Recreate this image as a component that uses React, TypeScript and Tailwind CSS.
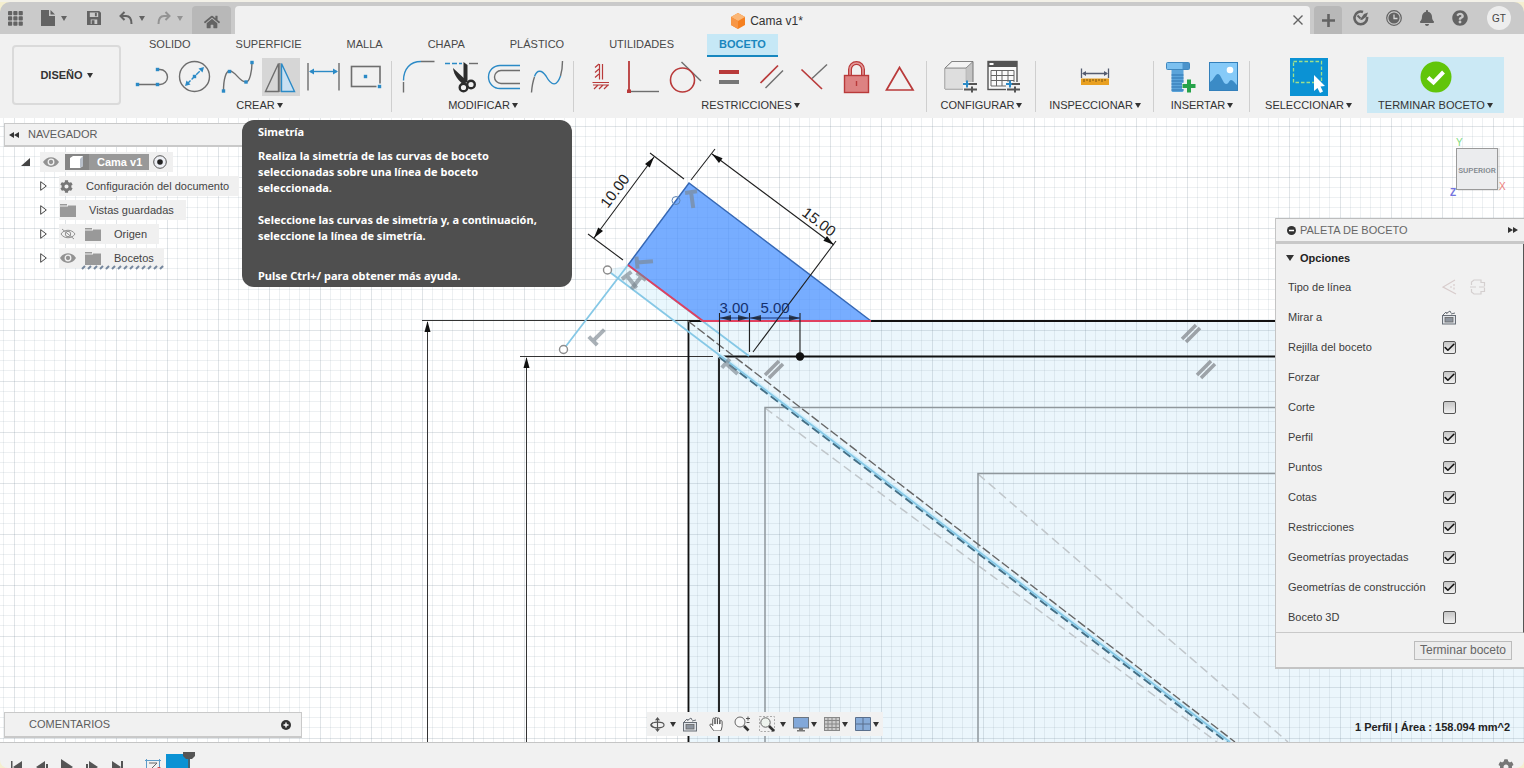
import React, { useState } from "react";
import { Check } from "lucide-react";
import { FaBell, FaCog, FaHome, FaQuestionCircle, FaHandPaper } from "react-icons/fa";

const BLUE = "#2b8ac6";
const RED = "#b93a3a";
const GRAY = "#6e6e6e";

type Kids = { children: React.ReactNode };

function Glyph({ children }: Kids) {
  return (
    <svg viewBox="0 0 38 38" className="block size-[38px]" fill="none" strokeWidth="1.4" aria-hidden="true">
      {children}
    </svg>
  );
}

function Dot({ x, y }: { x: number; y: number }) {
  return <rect x={x - 1.7} y={y - 1.7} width="3.4" height="3.4" fill={BLUE} />;
}

function Sliders() {
  return (
    <g>
      <path d="M22 26.5H36M22 31.5H36" stroke="#f1f1f1" strokeWidth="5" />
      <path d="M28 26H36" stroke="#555" strokeWidth="2" />
      <path d="M22 26H28M26 22.5V29.5" stroke={BLUE} strokeWidth="2" />
      <path d="M23 31.5H36M31 28.5V34.5" stroke="#555" strokeWidth="2" />
    </g>
  );
}

const createTools = [
  { name: "Línea", icon: <Glyph><path d="M25 11.5H27a7.5 7.5 0 0 1 0 15H5" stroke={GRAY} /><Dot x={4.5} y={26.5} /><Dot x={24.5} y={26.5} /><Dot x={24.5} y={11.5} /></Glyph> },
  { name: "Círculo", icon: <Glyph><circle cx="18.5" cy="18.5" r="15" stroke={GRAY} /><path d="M11 26L26 11" stroke={BLUE} strokeDasharray="5 1.5" /><path d="M9 28l1.500-5.500 4 4zM28 9l-5.500 1.500 4 4z" fill={BLUE} /><Dot x={18.5} y={18.5} /></Glyph> },
  { name: "Spline", icon: <Glyph><path d="M4.500 33C4.500 21 7 13 10.500 13C17 13 20 24 27 24C31 24 33 12 33 4.500" stroke={GRAY} /><Dot x={4.5} y={33} /><Dot x={10.5} y={13.5} /><Dot x={27} y={24} /><Dot x={33} y={4.5} /></Glyph> },
  { name: "Simetría", active: true, icon: <Glyph><path d="M3.500 33.500L16.500 5.500V33.500z" stroke={GRAY} /><path d="M17.800 5V34" stroke="#777" strokeWidth="1.200" /><path d="M19.500 5.500L32.500 33.500H19.500z" stroke={BLUE} fill="#c9e0f2" /></Glyph> },
  { name: "Cota de boceto", icon: <Glyph><path d="M3 5V32.500M34 5V32.500" stroke={GRAY} /><path d="M5 13.500H32" stroke={BLUE} /><path d="M4 13.500l5-3v6zM33 13.500l-5-3v6z" fill={BLUE} /></Glyph> },
  { name: "Rectángulo", icon: <Glyph><rect x="3.500" y="8.500" width="28.500" height="20" stroke={GRAY} strokeWidth="1.600" /><Dot x={17.5} y={18.5} /><rect x="28.500" y="25.500" width="6" height="6" fill="#f1f1f1" /><Dot x={31.5} y={28.5} /></Glyph> },
];

const modifyTools = [
  { name: "Empalme", icon: <Glyph><path d="M3.500 34.500V24M21 3.500H34.500" stroke={GRAY} /><path d="M3.500 22.500C3.500 11 10 3.500 21 3.500" stroke={BLUE} /></Glyph> },
  { name: "Recortar", icon: <Glyph><path d="M2 5.500H19" stroke={BLUE} strokeDasharray="5 2" /><path d="M26 5.500H35" stroke={GRAY} /><path d="M20.500 4L24.500 7V24H20.500z" fill="#2c2c2c" /><path d="M10 10L24 23L21 27C16 23 11 18 10 10z" fill="#2c2c2c" /><circle cx="20.500" cy="29.500" r="3.800" stroke="#2c2c2c" strokeWidth="2.400" /><circle cx="28" cy="26.500" r="3.800" stroke="#2c2c2c" strokeWidth="2.400" /></Glyph> },
  { name: "Desfase", icon: <Glyph><path d="M34 7.500H14a11.500 11.500 0 0 0 0 23H34" stroke={BLUE} /><path d="M34 12.500H15a6.500 6.500 0 0 0 0 13H34" stroke={GRAY} /></Glyph> },
  { name: "Curva", icon: <Glyph><path d="M2.500 34.500C3 28 4 23 5.500 19M31.500 18C33 13 33.500 8 33.500 3" stroke={GRAY} /><path d="M5.500 18.500C8 11 13 12 17 18C23 29 28 28 31.500 18" stroke={BLUE} /></Glyph> },
];

const constraintTools = [
  { name: "Horizontal/Vertical", icon: <Glyph><g stroke={RED}><path d="M18.500 6V21.500M21.500 6V21.500M11.500 24.500H28" strokeWidth="1.200" /><path d="M18 6l-4 3.500M18 11l-4 3.500M18 16l-4 3.500M13 31l4-4M18 31l4-4M23 31l4-4M12 27H28" strokeWidth="1.200" /></g></Glyph> },
  { name: "Perpendicular", icon: <Glyph><path d="M5 3V33" stroke={RED} strokeWidth="1.800" /><path d="M6 33.500H35" stroke={GRAY} /><rect x="3" y="31.500" width="4" height="3.500" fill={RED} /></Glyph> },
  { name: "Tangente", icon: <Glyph><path d="M14.500 4L34 23" stroke={GRAY} /><circle cx="15.500" cy="22" r="12" stroke={RED} strokeWidth="1.600" /></Glyph> },
  { name: "Igual", icon: <Glyph><rect x="9" y="12" width="20" height="4" fill={RED} /><rect x="9" y="22" width="20" height="4" fill="#777" /></Glyph> },
  { name: "Paralelo", icon: <Glyph><path d="M7.500 25L25 7.500" stroke={RED} strokeWidth="1.700" /><path d="M12.500 30L30 12.500" stroke={GRAY} strokeWidth="1.500" /></Glyph> },
  { name: "Punto medio", icon: <Glyph><path d="M5.500 11.500L26 31" stroke={RED} strokeWidth="1.700" /><path d="M16 20.500L31 6.500" stroke={GRAY} /></Glyph> },
  { name: "Fijar", icon: <Glyph><path d="M11 17V11.500a6.500 6.500 0 0 1 13 0V17" stroke={RED} strokeWidth="4" /><path d="M11 17V11.500a6.500 6.500 0 0 1 13 0V17" stroke="#e59a9a" strokeWidth="1.500" /><rect x="5.500" y="17.500" width="24" height="17" fill="#dd8282" stroke={RED} /><path d="M17.500 23V28" stroke={RED} /></Glyph> },
  { name: "Simetría (restricción)", icon: <Glyph><path d="M17.500 9.500L4.500 32H31z" stroke={RED} strokeWidth="1.700" /></Glyph> },
];

const configTools = [
  { name: "Configurar sólido", icon: <Glyph><path d="M4 10L11 3.500H32V24L25 31H4z" fill="#c4c4c4" stroke="#777" strokeWidth="1" /><path d="M4 10H25V31H4z" fill="#dedede" stroke="#b5b5b5" strokeWidth=".8" /><path d="M4 10L11 3.500H32L25 10z" fill="#f3f3f3" stroke="#777" strokeWidth=".8" /><Sliders /></Glyph> },
  { name: "Configurar tabla", icon: <Glyph><rect x="4" y="3.500" width="29" height="28" fill="#fafafa" stroke="#555" /><rect x="4" y="3.500" width="29" height="5.500" fill="#555" /><rect x="5.500" y="5" width="4" height="2" fill="#fff" /><path d="M7 12.500H30V28H7zM7 17.500H30M7 22.500H30M12.500 12.500V28M18 12.500V28M24 12.500V28" stroke="#666" strokeWidth="1" /><Sliders /></Glyph> },
];

const inspectTools = [
  { name: "Medir", icon: <Glyph><path d="M5.500 10.500V20M32.500 10.500V20M7 15.500H31" stroke="#555c70" strokeWidth="1.300" /><path d="M6 15.500l4-2.500v5zM32 15.500l-4-2.500v5z" fill="#555c70" /><rect x="5" y="20.500" width="28" height="6.500" fill="#e9a021" /><path d="M8 21v3M11 21v2M14 21v3M17 21v2M20 21v3M23 21v2M26 21v3M29 21v2" stroke="#7d5410" strokeWidth="1" /></Glyph> },
];

const insertTools = [
  { name: "Insertar tornillo", icon: <Glyph><rect x="9.500" y="11" width="12" height="23" rx="1.500" fill="#5ba4da" /><path d="M9.500 17H21.500M9.500 20H21.500M9.500 23H21.500M9.500 26H21.500M9.500 29H21.500M9.500 32H21.500" stroke="#2f75b1" strokeWidth="1" /><rect x="4.500" y="4.500" width="23" height="7" rx="1" fill="#7cc0ef" stroke="#4088bf" strokeWidth="1" /><rect x="20.500" y="5" width="6.500" height="6" fill="#4b93cb" /><path d="M27 21V35M20 28H34" stroke="#f1f1f1" strokeWidth="6" /><path d="M27 21.500V34.500M20.500 28H33.500" stroke="#27a34a" strokeWidth="4" /></Glyph> },
  { name: "Insertar imagen", icon: <Glyph><rect x="4.500" y="4.500" width="28" height="28" fill="#86caf8" stroke="#3380bb" strokeWidth="1" /><circle cx="25" cy="12" r="3.300" fill="#fff" /><path d="M5 24C9 22 10 16 13 16S18 26 21 26S24 22 26 22S30 25 32 27V32H5z" fill="#3b8bc6" /></Glyph> },
];

const selectTools = [
  { name: "Seleccionar", icon: <Glyph><rect width="38" height="38" fill="#0b92d4" /><rect x="3.500" y="3.500" width="28" height="21" stroke="#9fe08a" strokeWidth="1.300" strokeDasharray="3.500 2" /><path d="M24 17V33L27.500 30L30 35L33 33.500L30.500 28.500L35 28z" fill="#fff" /></Glyph> },
];

const finishTools = [
  { name: "Terminar boceto", icon: <Glyph><circle cx="19" cy="19" r="15.500" fill="#61c50a" /><path d="M11 19.500L16.500 24.500L26.500 14" stroke="#fff" strokeWidth="4" /></Glyph> },
];

type Tool = { name: string; icon: React.ReactNode; active?: boolean };

function Caret({ className = "" }: { className?: string }) {
  return (
    <svg viewBox="0 0 6 5" className={"h-[5px] w-[6px] shrink-0 " + className} fill="currentColor" aria-hidden="true">
      <path d="M0 0H6L3 5z" />
    </svg>
  );
}

function ToolGroup({ label, tools, className }: { label: string; tools: Tool[]; className: string }) {
  return (
    <section className={"relative flex shrink-0 flex-col items-center pt-px " + className}>
      <div className="flex gap-[5px]">
        {tools.map((t) => (
          <button key={t.name} type="button" aria-label={t.name} className={t.active ? "bg-[#d6d6d6]" : ""}>
            {t.icon}
          </button>
        ))}
      </div>
      <button type="button" className="mt-px flex h-4 items-center gap-0.5 whitespace-nowrap text-[11px] leading-4">
        {label}
        <Caret />
      </button>
    </section>
  );
}

const SEP = "after:absolute after:right-0 after:top-1 after:h-[51px] after:w-px after:bg-[#cfcfcf]";

function TitleBar() {
  return (
    <div className="flex h-8 items-stretch rounded-t-[10px] bg-[#cacaca] text-[#636363]">
      <div className="flex w-48 shrink-0 items-center pl-2">
        <button type="button" aria-label="Panel de datos">
          <svg viewBox="0 0 15 15" className="size-[15px]" fill="currentColor">
            {[0, 5.3, 10.6].map((y) => [0, 5.3, 10.6].map((x) => <rect key={x + "-" + y} x={x} y={y} width="4.200" height="4.200" rx=".8" />))}
          </svg>
        </button>
        <button type="button" aria-label="Archivo" className="ml-[18px] flex items-center gap-1.5">
          <svg viewBox="0 0 14 16" className="h-4 w-[14px]" fill="currentColor"><path d="M0 0H8V6H14V16H0z" /><path d="M9.500 0L14 4.500H9.500z" /></svg>
          <Caret />
        </button>
        <button type="button" aria-label="Guardar" className="ml-5">
          <svg viewBox="0 0 15 15" className="size-[14px]" fill="currentColor" fillRule="evenodd"><path d="M0 0H13L15 2V15H0zM3 1.500V6.500H12V1.500zM4 9V14H11V9z" /><path d="M8.500 2H10.500V5.500H8.500zM5 10H8V14H5z" /></svg>
        </button>
        <button type="button" aria-label="Deshacer" className="ml-[18px] flex items-center gap-1.5">
          <svg viewBox="0 0 14 14" className="size-[14px]" fill="none" stroke="currentColor" strokeWidth="2"><path d="M5.500 1L1.500 5L5.500 9M2 5H7C11 5 12.500 8 12.500 13" /></svg>
          <Caret />
        </button>
        <button type="button" aria-label="Rehacer" className="ml-3 flex items-center gap-1.5 text-[#939393]">
          <svg viewBox="0 0 14 14" className="size-[14px]" fill="none" stroke="currentColor" strokeWidth="2"><path d="M8.500 1L12.500 5L8.500 9M12 5H7C3 5 1.500 8 1.500 13" /></svg>
          <Caret />
        </button>
      </div>
      <button type="button" aria-label="Inicio" className="mr-1 mt-1 flex w-[39px] shrink-0 items-center justify-center rounded-t-sm bg-[#b8b8b8]">
        <FaHome className="mt-1 size-4" />
      </button>
      <div className="mt-1 flex min-w-0 flex-1 items-center rounded-t bg-[#f1f1f1]">
        <div className="flex flex-1 items-center justify-center gap-1 pl-1.5 pt-0.5 text-[12px] text-[#333]">
          <svg viewBox="0 0 16 16" className="size-4"><path d="M8 0L15 4V12L8 16L1 12V4z" fill="#f58020" /><path d="M8 0L15 4L8 8L1 4z" fill="#fbb777" /><path d="M1 4L8 8V16L1 12z" fill="#f79645" /></svg>
          <span>Cama v1*</span>
        </div>
        <button type="button" aria-label="Cerrar" className="mr-1.5 p-px">
          <svg viewBox="0 0 10 10" className="size-[10px]" stroke="currentColor" strokeWidth="1.400"><path d="M.5 .5L9.500 9.500M9.500 .5L.5 9.500" /></svg>
        </button>
      </div>
      <div className="flex shrink-0 items-center pl-1">
        <button type="button" aria-label="Nuevo" className="mt-1 flex h-7 w-7 items-center justify-center rounded-t-sm bg-[#b8b8b8]">
          <svg viewBox="0 0 13 13" className="size-[13px]" stroke="currentColor" strokeWidth="2.600"><path d="M6.500 0V13M0 6.500H13" /></svg>
        </button>
        <div className="flex items-center gap-[17px] pl-[11px]">
          <button type="button" aria-label="Extensiones">
            <svg viewBox="0 0 16 16" className="size-4" fill="none" stroke="currentColor"><path d="M14 7A6.300 6.300 0 1 1 10 2" strokeWidth="2.600" /><path d="M7 9.500L11 4L15 2.500L13.500 6.500L9 10z" fill="currentColor" stroke="none" /><path d="M4.500 5.500l3 3" strokeWidth="2" /></svg>
          </button>
          <button type="button" aria-label="Trabajos">
            <svg viewBox="0 0 16 16" className="size-4"><circle cx="8" cy="8" r="7.300" fill="none" stroke="currentColor" strokeWidth="1.200" /><circle cx="8" cy="8" r="5.600" fill="currentColor" /><path d="M8 4.500V8.500H11.500" fill="none" stroke="#d5d5d5" strokeWidth="1.300" /></svg>
          </button>
          <button type="button" aria-label="Notificaciones"><FaBell className="size-4" /></button>
          <button type="button" aria-label="Ayuda"><FaQuestionCircle className="size-4" /></button>
        </div>
        <button type="button" aria-label="Cuenta" className="ml-[19px] mr-[13px] flex size-6 items-center justify-center rounded-full bg-[#ededed] text-[10px] text-[#444]">GT</button>
      </div>
    </div>
  );
}

const tabs = ["SOLIDO", "SUPERFICIE", "MALLA", "CHAPA", "PLÁSTICO", "UTILIDADES", "BOCETO"];

function Toolbar() {
  return (
    <div className="flex h-[84px] bg-[#f1f1f1] text-[#333]">
      <button type="button" className="ml-3 mt-[11px] flex h-[60px] w-[109px] shrink-0 items-center justify-center gap-1 rounded border-2 border-[#dadada] text-[11px] font-bold">
        DISEÑO <Caret />
      </button>
      <div className="flex min-w-0 flex-1 flex-col">
        <nav className="flex h-[23px] gap-[21px] pl-4 text-[11px] text-[#484848]">
          {tabs.map((t) => (
            <button
              key={t}
              type="button"
              className={t === "BOCETO" ? "border-b-2 border-[#1787bf] bg-[#c6e8f6] px-3 font-bold text-[#1a86be]" : "border-b-2 border-transparent px-3"}
            >
              {t}
            </button>
          ))}
        </nav>
        <div className="flex pl-[6px]">
          <ToolGroup label="CREAR" tools={createTools} className={"w-[265px] " + SEP} />
          <ToolGroup label="MODIFICAR" tools={modifyTools} className={"w-[182px] " + SEP} />
          <ToolGroup label="RESTRICCIONES" tools={constraintTools} className={"w-[353px] " + SEP} />
          <ToolGroup label="CONFIGURAR" tools={configTools} className={"w-[109px] " + SEP} />
          <ToolGroup label="INSPECCIONAR" tools={inspectTools} className={"w-[118px] " + SEP} />
          <ToolGroup label="INSERTAR" tools={insertTools} className={"w-[96px] " + SEP} />
          <ToolGroup label="SELECCIONAR" tools={selectTools} className="w-[117px]" />
          <ToolGroup label="TERMINAR BOCETO" tools={finishTools} className="w-[137px] bg-[#cbe9f5]" />
        </div>
      </div>
    </div>
  );
}

function Tee({ x, y, r }: { x: number; y: number; r: number }) {
  return <path transform={`translate(${x} ${y}) rotate(${r})`} d="M-6 -7H6M0 -7V9" stroke="#7d8790" strokeOpacity=".65" strokeWidth="4" />;
}

function Parallel({ x, y }: { x: number; y: number }) {
  return <path d={`M${x - 9} ${y + 6}l14 -14M${x - 5} ${y + 9}l14 -14`} stroke="#8a8f94" strokeOpacity=".8" strokeWidth="3.500" />;
}

function Arrow({ x, y, r }: { x: number; y: number; r: number }) {
  return <path transform={`translate(${x} ${y}) rotate(${r})`} d="M0 0L-11 -3V3z" fill="#111" stroke="none" />;
}

function Sketch() {
  return (
    <svg className="absolute inset-0 size-full" fill="none" aria-label="Boceto">
      <defs>
        <pattern id="grid" width="51" height="51" x="14" y="330" patternUnits="userSpaceOnUse">
          <path d="M10.500 0V51M20.500 0V51M30.500 0V51M40.500 0V51M0 10.500H51M0 20.500H51M0 30.500H51M0 40.500H51" stroke="#778899" strokeOpacity=".13" />
          <path d="M.5 0V51M0 .5H51" stroke="#667788" strokeOpacity=".2" />
        </pattern>
      </defs>
      <g transform="translate(0 -118)">
        <path d="M688 321H3000V2000H688z" fill="#ebf6fc" />
        <path d="M628 265L703 321L749 356H719L607 270z" fill="#e9f7fd" />
        <rect y="100" width="3000" height="2000" fill="url(#grid)" />

        <path d="M765 408L1217 742M978 474L1288 742" stroke="#c0c6ca" strokeWidth="1.500" strokeDasharray="9 5" />
        <path d="M765 2000V407.500H3000M978 2000V473.500H3000" stroke="#8f979c" strokeWidth="1.500" />

        <path d="M422 320.500H688M520 356.500H713M427.500 322V2000M526.500 358V2000" stroke="#333" />
        <path d="M688.500 2000V321H3000M719 2000V356.500H3000" stroke="#111" strokeWidth="1.800" />
        <Arrow x={427.5} y={321} r={-90} />
        <Arrow x={526.5} y={357} r={-90} />

        <path d="M719 355L1230 742" stroke="#d3effb" strokeWidth="5" />
        <path d="M688 321L1235 742" stroke="#666" strokeWidth="1.400" strokeDasharray="9 3" />
        <path d="M719 357L1228 743" stroke="#456f85" strokeWidth="2" strokeDasharray="9 4" />
        <path d="M607 270L1230 742" stroke="#86c8e6" strokeWidth="1.800" />
        <path d="M628 265L749 356M628 265L563 350" stroke="#86c8e6" strokeWidth="1.800" />

        <path d="M689 183L871 321H703L628 265z" fill="#4a92ff" fillOpacity=".75" />
        <path d="M628 265L689 183L871 321" stroke="#3668b5" strokeWidth="1.500" />
        <path d="M628 265L703 321H871" stroke="#e0405f" strokeWidth="1.800" />

        <g stroke="#222" strokeWidth="1.100">
          <path d="M691 180L715 149M712 154L834 245M836 241L753 352" />
          <path d="M684 179L650 153M654 157L594 238M588 234L623 260" />
          <path d="M719.500 313V352M749.500 313V352M800 313V356" />
          <path d="M719.500 318H800" stroke="#18377e" />
        </g>
        <Arrow x={712} y={154} r={217} />
        <Arrow x={834} y={245} r={37} />
        <Arrow x={654} y={157} r={-53} />
        <Arrow x={594} y={238} r={127} />
        <g opacity=".7">
          <Arrow x={720} y={318} r={180} />
          <Arrow x={749} y={318} r={0} />
          <Arrow x={750} y={318} r={180} />
          <Arrow x={800} y={318} r={0} />
        </g>
        <circle cx="800" cy="356.500" r="4.200" fill="#111" />
        <circle cx="563.500" cy="349.500" r="4" fill="#fff" stroke="#8c8c8c" strokeWidth="1.400" />
        <circle cx="607.500" cy="270" r="4" fill="#fff" stroke="#8c8c8c" strokeWidth="1.400" />
        <circle cx="676" cy="200.500" r="4" stroke="#5f86b5" />

        <Tee x={598} y={336} r={225} />
        <Tee x={692} y={199} r={-8} />
        <Tee x={644} y={262} r={-95} />
        <Tee x={631} y={281} r={-38} />
        <Tee x={637} y={282} r={38} />
        <Tee x={731} y={368} r={-48} />
        <Parallel x={774} y={369} />
        <Parallel x={1191} y={333} />
        <Parallel x={1206} y={369} />

        <g fontFamily="Liberation Sans, Arial, sans-serif" fontSize="15" textAnchor="middle" fill="#222">
          <text transform="translate(619 194) rotate(-53)">10.00</text>
          <text transform="translate(816 226) rotate(37)">15.00</text>
          <text x="734" y="313" fill="#15316f">3.00</text>
          <text x="775" y="313" fill="#15316f">5.00</text>
        </g>
      </g>
    </svg>
  );
}

function ViewCube() {
  return (
    <svg viewBox="0 0 64 64" className="absolute right-[10px] top-[18px] size-16" aria-label="Vista superior">
      <rect x="8" y="12" width="42" height="43" fill="#000" opacity=".08" />
      <rect x="6.500" y="12.500" width="41" height="41" fill="#ebecee" stroke="#9a9a9a" />
      <g fontFamily="Liberation Sans, sans-serif" fontSize="10">
        <text x="27" y="37" textAnchor="middle" fontFamily="Roboto, sans-serif" fontSize="8" fontWeight="500" fill="#7e868c">SUPERIOR</text>
        <text x="6" y="10" fill="#7fdc7f">Y</text>
        <text x="49" y="54" fill="#ee7d7d">X</text>
        <text x="0" y="60" fill="#7373e0" fontWeight="bold">Z</text>
      </g>
    </svg>
  );
}

function FolderIcon() {
  return (
    <svg viewBox="0 0 16 13" className="mr-[13px] h-[13px] w-4 shrink-0" fill="#999"><path d="M0 0H7V1.500H0zM0 2.500H8V1.500H16V13H0z" /></svg>
  );
}

function EyeIcon({ hidden = false }: { hidden?: boolean }) {
  return (
    <svg viewBox="0 0 16 12" className="h-3 w-4 shrink-0" fill="none" stroke="#929292">
      {hidden ? (
        <g><path d="M1 6C4 1 12 1 15 6C12 11 4 11 1 6zM2 1L14 11" /><circle cx="8" cy="6" r="2.700" /></g>
      ) : (
        <g><path d="M0 6C4 -.5 12 -.5 16 6C12 12.500 4 12.500 0 6z" fill="#929292" stroke="none" /><circle cx="8" cy="6" r="2.800" stroke="#f0f0f0" strokeWidth="1.300" /></g>
      )}
    </svg>
  );
}

function Expander() {
  return (
    <svg viewBox="0 0 7 10" className="h-[10px] w-[7px] shrink-0" fill="#fff" stroke="#444"><path d="M.7 .7V9.300L6.300 5z" /></svg>
  );
}

function TreeRow({ children, className = "" }: Kids & { className?: string }) {
  return (
    <li className="flex h-5 items-center gap-3 pl-9">
      <button type="button" aria-label="Expandir" className="ml-1"><Expander /></button>
      <div className={"flex h-5 items-center bg-[#f0f0f0] pl-px " + className}>{children}</div>
    </li>
  );
}

function Navigator() {
  return (
    <aside className="ml-1 mt-[5px] w-[298px]">
      <header className="flex h-6 items-center border border-b-2 border-[#c9c9c9] bg-[#f1f1f1] pl-1 text-[11px] text-[#5c5c5c]">
        <svg viewBox="0 0 10 6" className="mr-[9px] h-[6px] w-[10px]" fill="#333"><path d="M5 0V6L0 3zM10 0V6L5 3z" /></svg>
        NAVEGADOR
      </header>
      <ul className="-ml-1 mt-[5px] flex flex-col gap-1 text-[11px] text-[#444]">
        <li className="flex h-5 items-center pl-[21px]">
          <svg viewBox="0 0 9 8" className="mr-[10px] h-2 w-[9px]" fill="#444"><path d="M9 0V8H0z" /></svg>
          <div className="flex h-5 items-center gap-1.5 bg-[#f0f0f0] pl-[3px] pr-1.5">
            <EyeIcon />
            <div className="flex h-4 items-center bg-[#999] pr-[7px] font-bold text-white">
              <svg viewBox="0 0 24 16" className="mr-2 h-4 w-6"><rect width="24" height="16" fill="#858585" /><path d="M5 4L8 2H18V12L15 14H5z" fill="#fff" /><path d="M15 5V14L18 12V2z" fill="#b8bfca" /></svg>
              Cama v1
            </div>
            <svg viewBox="0 0 14 14" className="-ml-0.5 size-[14px]"><circle cx="7" cy="7" r="6.300" fill="#eef0f5" stroke="#555" /><circle cx="7" cy="7" r="2.800" fill="#222" /></svg>
          </div>
        </li>
        <TreeRow className="pr-[10px]"><FaCog className="mr-[13px] size-[13px] text-[#777]" />Configuración del documento</TreeRow>
        <TreeRow className="pr-3"><FolderIcon />Vistas guardadas</TreeRow>
        <TreeRow className="pr-3"><EyeIcon hidden /><span className="w-[9px]" /><FolderIcon />Origen</TreeRow>
        <TreeRow className="pr-[10px]">
          <EyeIcon />
          <span className="w-[9px]" />
          <span className="relative flex items-center">
            <FolderIcon />Bocetos
            <svg className="absolute -bottom-1 -left-1 h-[5px] w-[84px]" stroke="#75879e" strokeWidth="2" aria-hidden="true">
              {Array.from({ length: 14 }, (_, i) => <path key={i} d={`M${i * 6 + 1} 4l3 -3`} />)}
            </svg>
          </span>
        </TreeRow>
      </ul>
    </aside>
  );
}

function Tooltip() {
  return (
    <div role="tooltip" className="absolute left-[242px] top-0.5 z-10 h-[167px] w-[330px] whitespace-nowrap rounded-xl bg-[#4f4f4f] px-4 pt-1 font-['Noto_Sans','Open_Sans',sans-serif] text-[11px] font-bold leading-4 text-white">
      <p>Simetría</p>
      <p className="mt-2">Realiza la simetría de las curvas de boceto<br />seleccionadas sobre una línea de boceto<br />seleccionada.</p>
      <p className="mt-4">Seleccione las curvas de simetría y, a continuación,<br />seleccione la línea de simetría.</p>
      <p className="mt-6">Pulse Ctrl+/ para obtener más ayuda.</p>
    </div>
  );
}

const initialOptions = [
  { label: "Rejilla del boceto", on: true },
  { label: "Forzar", on: true },
  { label: "Corte", on: false },
  { label: "Perfil", on: true },
  { label: "Puntos", on: true },
  { label: "Cotas", on: true },
  { label: "Restricciones", on: true },
  { label: "Geometrías proyectadas", on: true },
  { label: "Geometrías de construcción", on: true },
  { label: "Boceto 3D", on: false },
];

function LookAtIcon() {
  return (
    <svg viewBox="0 0 16 15" className="h-[15px] w-4" fill="none" stroke="#686e76"><path d="M2 5L5 2L6 4M6 3L9 1L10 3M10 4L14 3" /><rect x="1.500" y="5.500" width="13" height="8.500" fill="#dfe3e8" /><rect x="4" y="7.500" width="8" height="4.500" fill="#8d949e" stroke="#666" strokeWidth=".8" /></svg>
  );
}

function Palette() {
  const [options, setOptions] = useState(initialOptions);
  return (
    <aside className="absolute right-0 top-[100px] w-[249px] border-b-2 border-l border-[#c4c4c4] bg-[#f1f1f1] text-[11px] text-[#3c3c3c]">
      <header className="flex h-[26px] items-center border-b-[3px] border-t border-[#c8c8c8] border-t-[#bdbdbd] pl-[11px] pr-[6px] text-[#666]">
        <svg viewBox="0 0 9 9" className="mr-1 size-[9px]"><circle cx="4.500" cy="4.500" r="4.500" fill="#333" /><path d="M2 4.500H7" stroke="#fff" strokeWidth="1.500" /></svg>
        <h2 className="flex-1">PALETA DE BOCETO</h2>
        <svg viewBox="0 0 10 6" className="h-[6px] w-[10px]" fill="#333"><path d="M0 0V6L5 3zM5 0V6L10 3z" /></svg>
      </header>
      <div className="border-b border-r border-b-[#c9c9c9] border-r-[#555] pl-3 pt-0.5">
        <h3 className="flex h-6 items-center gap-1.5 font-bold text-[#222]"><svg viewBox="0 0 8 6" className="-ml-0.5 h-[6px] w-2" fill="#333"><path d="M0 0H8L4 6z" /></svg>Opciones</h3>
        <div className="mt-0.5 flex h-[30px] items-center">
          <span className="w-[154px]">Tipo de línea</span>
          <button type="button" aria-label="Construcción" className="mr-3"><svg viewBox="0 0 16 16" className="size-4" fill="none" stroke="#d8cccc" strokeWidth="1.200"><path d="M13 1L1 8L14 15" /><path d="M8 8H11M12 5V11" strokeDasharray="2 1.500" /></svg></button>
          <button type="button" aria-label="Línea de centro"><svg viewBox="0 0 16 16" className="size-4" fill="none" stroke="#d4cfcf" strokeWidth="1.200"><path d="M1.500 6V3L4 1H11V3.500H14.500V7M1.500 10V13L4 15H11V12.500H14.500V9M0 8H6M9 8H15" /></svg></button>
        </div>
        <div className="flex h-[30px] items-center">
          <span className="w-[153px]">Mirar a</span>
          <button type="button" aria-label="Mirar a"><LookAtIcon /></button>
        </div>
        {options.map((o, i) => (
          <label key={o.label} className="flex h-[30px] items-center">
            <span className="w-[155px]">{o.label}</span>
            <span className="relative flex">
              <input
                type="checkbox"
                checked={o.on}
                onChange={() => setOptions(options.map((p, j) => (j === i ? { ...p, on: !p.on } : p)))}
                className="size-[13px] appearance-none rounded-[2px] border border-[#555] bg-linear-to-b from-[#c6c6c6] to-[#f0f0f0]"
              />
              {o.on && <Check className="pointer-events-none absolute inset-0 size-[13px] text-[#111]" strokeWidth={3} />}
            </span>
          </label>
        ))}
      </div>
      <div className="flex h-[34px] items-center justify-end pr-3">
        <button type="button" className="h-[19px] border border-[#bcbcbc] bg-[#ececec] px-[5px] text-[12px] leading-4 text-[#666]">Terminar boceto</button>
      </div>
    </aside>
  );
}

function DisplayBar() {
  return (
    <div className="absolute bottom-1.5 left-[647px] flex h-6 items-center bg-[#f1f1f1] pl-[3px] pr-1 text-[#333]">
      <button type="button" aria-label="Órbita" className="flex items-center gap-[5px]">
        <svg viewBox="0 0 16 16" className="size-[15px]" fill="none" stroke="#555" strokeWidth="1.200"><ellipse cx="8" cy="8.500" rx="7" ry="3" /><path d="M8 1V15M6 3.500L8 1L10 3.500M6 12.500L8 15L10 12.500M3 6L1 8.500L3.500 10.500" /></svg>
        <Caret />
      </button>
      <button type="button" aria-label="Mirar a" className="ml-1.5"><LookAtIcon /></button>
      <button type="button" aria-label="Encuadre" className="ml-[11px]"><FaHandPaper className="size-[14px] fill-white stroke-[#555] stroke-[36px]" /></button>
      <button type="button" aria-label="Zoom" className="ml-[11px]">
        <svg viewBox="0 0 16 16" className="size-4" fill="none"><circle cx="6" cy="6" r="5" stroke="#666" fill="#f8f8f8" /><path d="M10 10L14.500 14.500" stroke="#333" strokeWidth="2.600" /><path d="M12 2.500H16M14 .5V4.500M12.500 6.500H15.500" stroke="#555" /></svg>
      </button>
      <button type="button" aria-label="Zoom de ventana" className="ml-[9px] flex items-center gap-[5px]">
        <svg viewBox="0 0 16 16" className="size-4" fill="none"><rect x=".5" y=".5" width="15" height="15" stroke="#aaa" strokeDasharray="2 1.500" /><circle cx="6.500" cy="6.500" r="4.700" stroke="#666" fill="#eef4ee" /><path d="M10 10L15 15" stroke="#333" strokeWidth="2.600" /></svg>
        <Caret />
      </button>
      <button type="button" aria-label="Visualización" className="ml-[7px] flex items-center gap-0.5">
        <svg viewBox="0 0 16 16" className="size-4"><rect x=".5" y="1.500" width="15" height="10.500" fill="#82a8d9" stroke="#6b7580" /><path d="M6 12H10V14H12V15.500H4V14H6z" fill="#777" /></svg>
        <Caret />
      </button>
      <button type="button" aria-label="Rejilla" className="ml-[7px] flex items-center gap-0.5">
        <svg viewBox="0 0 16 16" className="size-4"><rect y="1" width="16" height="14" fill="#ccc" /><path d="M0 1.500H16M0 4.500H16M0 8H16M0 11.500H16M0 14.500H16M.5 1V15M4 1V15M8 1V15M12 1V15M15.500 1V15" stroke="#888" /></svg>
        <Caret />
      </button>
      <button type="button" aria-label="Ventanas" className="ml-[7px] flex items-center gap-0.5">
        <svg viewBox="0 0 16 16" className="size-4" stroke="#5a6f8c" fill="#88acd9"><path d="M.5 1.500H15.500V14.500H.5zM8 1.500V14.500M.5 8H15.500" /></svg>
        <Caret />
      </button>
    </div>
  );
}

function Timeline() {
  return (
    <footer className="flex h-[26px] shrink-0 items-start overflow-hidden rounded-b-lg border-t border-[#c5c5c5] bg-[#f1f1f1] text-[#555]">
      <div className="flex gap-[9px] pl-[9px] pt-4">
        <button type="button" aria-label="Al inicio"><svg viewBox="0 0 16 16" className="size-4" fill="currentColor"><path d="M2 2H3.500V14H2zM13 2V14L4 8z" /></svg></button>
        <button type="button" aria-label="Atrás"><svg viewBox="0 0 16 16" className="size-4" fill="currentColor"><path d="M11 2V14L2 8zM12 5H14V14H12z" /></svg></button>
        <button type="button" aria-label="Reproducir"><svg viewBox="0 0 16 16" className="size-4" fill="currentColor"><path d="M2 0L14 8L2 16z" /></svg></button>
        <button type="button" aria-label="Adelante"><svg viewBox="0 0 16 16" className="size-4" fill="currentColor"><path d="M5 2V14L14 8zM2 5H4V14H2z" /></svg></button>
        <button type="button" aria-label="Al final"><svg viewBox="0 0 16 16" className="size-4" fill="currentColor"><path d="M3 2V14L12 8zM12 2H14V14H12z" /></svg></button>
      </div>
      <button type="button" aria-label="Boceto 1" className="ml-5 mt-[15px]">
        <svg viewBox="0 0 16 16" className="size-4" fill="none"><path d="M1.500 1V16M14.500 1V11M0 2.500H16" stroke="#5b9bc9" /><path d="M4 5H12L5 12" stroke="#666" /><circle cx="14" cy="11" r="2" fill="#cc4444" /></svg>
      </button>
      <button type="button" aria-label="Boceto 2" className="ml-[5px] mt-[9px]">
        <svg viewBox="0 0 30 16" className="h-4 w-[30px]"><rect y="2" width="24" height="14" fill="#0b92d4" /><path d="M17 0H29V4L26 7H20L17 4z" fill="#555" /><path d="M23 7V16" stroke="#555" strokeWidth="1.500" /></svg>
      </button>
      <button type="button" aria-label="Configuración" className="ml-auto mr-2.5 mt-4"><FaCog className="size-4 text-[#777]" /></button>
    </footer>
  );
}

export default function App() {
  return (
    <div className="flex h-screen flex-col overflow-hidden bg-[#f5efcf] font-['Liberation_Sans',Arial,sans-serif]">
      <div className="h-0.5 shrink-0 bg-[#f3f1e8]" />
      <header className="shrink-0">
        <TitleBar />
        <Toolbar />
      </header>
      <main className="relative min-h-0 flex-1 bg-white">
        <Sketch />
        <div className="relative flex h-full flex-col justify-between">
          <Navigator />
          <div className="mb-1 flex items-center justify-between">
            <button type="button" className="ml-1 flex h-[26px] w-[298px] items-center justify-between border border-b-2 border-[#c9c9c9] bg-[#f1f1f1] pl-6 pr-[10px] text-[11px] text-[#5c5c5c]">
              COMENTARIOS
              <svg viewBox="0 0 10 10" className="size-[10px]"><circle cx="5" cy="5" r="5" fill="#333" /><path d="M2.500 5H7.500M5 2.500V7.500" stroke="#fff" strokeWidth="1.400" /></svg>
            </button>
            <p className="mr-[14px] mt-1 text-[11px] font-bold text-[#222]">1 Perfil | Área : 158.094 mm^2</p>
          </div>
        </div>
        <ViewCube />
        <Palette />
        <DisplayBar />
        <Tooltip />
      </main>
      <Timeline />
    </div>
  );
}
